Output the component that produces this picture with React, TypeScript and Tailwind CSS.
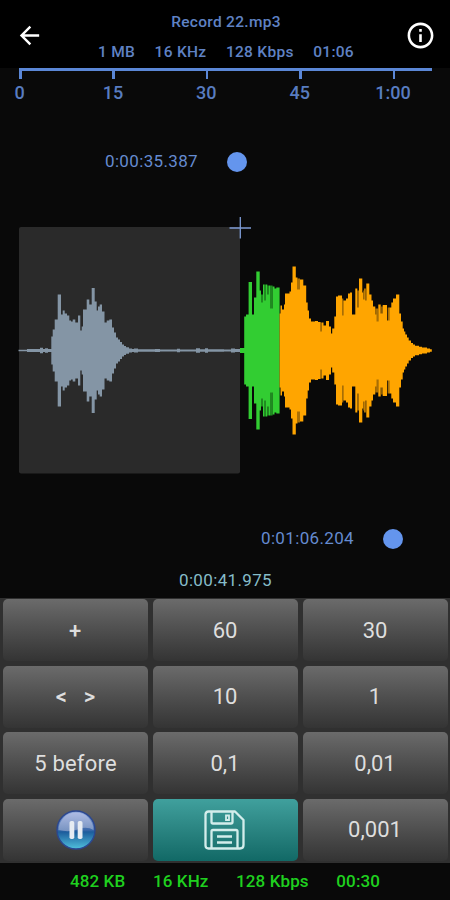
import type { ReactNode } from "react";
import clsx from "clsx";

// [start x, half height] pairs; every bar runs up to the start of the next one
type Bars = [number, number][];

const CENTER = 350.5;
const TOP = 210;

const grayBars: Bars = [
  [18.5, 0.7], [27, 1.4], [40, 2.8], [43, 1.6], [45, 2.2], [48, 1.6], [51.3, 14], [52.7, 21],
  [54.7, 31], [57.7, 56], [61, 36], [62.7, 40], [64.7, 37], [67, 35], [69.3, 30], [71, 29],
  [72.7, 31], [75.3, 28], [78, 35], [80.3, 20], [81.7, 24], [83, 41], [86.7, 51], [89.3, 46],
  [91.7, 62.5], [94.7, 49], [96.7, 40], [98, 44], [99.7, 46], [102, 39], [104.5, 28], [106.7, 30],
  [109.3, 31], [112, 23], [114, 18], [116, 13], [118, 11], [120, 8.5], [122, 6], [124, 4.5],
  [126, 3.2], [129, 2], [132, 1.5], [134, 2], [138, 1.2], [155, 1.6], [160, 1.1], [177, 1.8],
  [180, 1], [196, 2.2], [200, 1.2], [205, 2.2], [208, 1.2], [224, 1], [231, 2], [235, 1.4], [240, 0],
];

const greenBars: Bars = [
  [240, 2.5], [244.2, 34], [246, 36], [248.6, 68.5], [252, 36], [254, 53], [256.3, 79],
  [259.7, 60], [261, 48], [263, 66], [264.5, 50], [266, 66], [267.3, 56], [269, 65],
  [270, 42], [272.6, 64], [274.5, 62], [276.3, 63], [279.6, 0],
];

const orangeBars: Bars = [
  [279.6, 37], [280.5, 45], [282, 41], [284, 46], [285, 57], [289.5, 59], [291, 68], [292.5, 84],
  [295.8, 73], [297.5, 61], [300, 71], [303.3, 65], [306.2, 48], [307.7, 40], [309, 32], [311, 29],
  [315, 29.5], [318, 28.5], [320.6, 19], [322, 28], [323.5, 25], [326, 29.5], [329, 24], [331, 17],
  [332.2, 22], [334.3, 34], [336, 54], [338, 55], [342, 35], [343.3, 50], [346, 52], [348, 57],
  [350, 58], [352, 36], [355.3, 62], [357.3, 43], [359, 72], [362.3, 58], [363.3, 51], [364.3, 62],
  [365.6, 50], [366.3, 67], [369.3, 56], [371.5, 50], [373, 44], [375.3, 36], [376.5, 29],
  [378.3, 46], [380.7, 37], [382.7, 45.5], [387, 30], [389.3, 43], [391.3, 48], [393, 52],
  [396, 56], [399.3, 37], [401, 29], [402.7, 22], [404, 19], [405.3, 16], [407, 13], [408.7, 10],
  [411, 7.5], [413, 6], [415, 4.8], [419, 3.8], [422, 3], [427, 2], [430, 1.2], [431.8, 0],
];

// dimmer slivers that sit in the notches of the coloured parts
const greenShade: Bars = [[261, 56], [263, 0], [264.5, 66], [266, 0], [267.3, 65], [269, 0], [270, 65], [272.6, 0]];
const orangeShade: Bars = [
  [297.5, 72], [300, 0], [320.6, 28], [322, 0], [342, 52], [343.3, 0], [357.3, 60], [359, 0],
  [363.3, 60], [364.3, 0], [375.3, 42], [378.3, 0], [381.2, 44], [382.7, 0], [387.7, 43], [389.3, 0],
];

function barsPath(bars: Bars) {
  return bars
    .slice(0, -1)
    .map(([x, h], i) => `M${x} ${CENTER - h}H${bars[i + 1][0]}V${CENTER + h}H${x}Z`)
    .join("");
}

const ticks = ["0", "15", "30", "45", "1:00"];

function Ruler() {
  return (
    <div className="ml-[19px] w-[413px]">
      <div className="flex h-[12px] border-t-[3px] border-[#5b87d6]">
        {ticks.map((t) => (
          <div key={t} className="w-[93.4px] shrink-0">
            <div className="h-[8px] w-[2.5px] bg-[#5b87d6]" />
          </div>
        ))}
      </div>
      <div className="mt-[2px] flex text-[18px] leading-[22px] font-medium text-[#587cc0]">
        {ticks.map((t) => (
          <div key={t} className="flex w-[93.4px] shrink-0 pl-[0.5px]">
            <span className="flex w-0 justify-center whitespace-nowrap">{t}</span>
          </div>
        ))}
      </div>
    </div>
  );
}

function Waveform() {
  return (
    <svg className="block h-[290px] w-full" viewBox={`0 ${TOP} 450 290`}>
      <rect x="19" y="227" width="221" height="246.5" rx="2" fill="#2a2a2a" />
      <path d={barsPath(grayBars)} fill="#8495a5" />
      <path d={barsPath(greenShade)} fill="#1f8a20" />
      <path d={barsPath(greenBars)} fill="#32cd32" />
      <path d={barsPath(orangeShade)} fill="#a86e05" />
      <path d={barsPath(orangeBars)} fill="#ffa500" />
      <path d="M229.5 228H251M240.3 217V238.5" stroke="#7d9bd4" strokeWidth="1.3" />
    </svg>
  );
}

function PauseIcon() {
  return (
    <svg width="40" height="40" viewBox="0 0 40 40" className="ml-px">
      <defs>
        <linearGradient id="orb" x1="0" y1="0" x2="0" y2="1">
          <stop offset="0" stopColor="#8ca4d8" />
          <stop offset="0.5" stopColor="#3c69ab" />
          <stop offset="0.55" stopColor="#1c5c9c" />
          <stop offset="1" stopColor="#50c0dc" />
        </linearGradient>
        <linearGradient id="gloss" x1="0" y1="0" x2="0" y2="1">
          <stop offset="0" stopColor="#b5c0e6" />
          <stop offset="1" stopColor="#829bc5" />
        </linearGradient>
      </defs>
      <circle cx="20" cy="20" r="19" fill="url(#orb)" stroke="#2b4790" strokeWidth="1.4" />
      <path d="M2.5 20A17.5 17.5 0 0 1 37.5 20Q33 17 26 18Q15 23 2.5 20Z" fill="url(#gloss)" opacity="0.85" />
      <rect x="13.5" y="11" width="4.8" height="18" rx="1.8" fill="#e6ebf2" />
      <rect x="21.7" y="11" width="4.8" height="18" rx="1.8" fill="#e6ebf2" />
    </svg>
  );
}

function SaveIcon() {
  return (
    <svg width="42" height="40" viewBox="0 0 42 40" fill="none" stroke="#d3edeb" strokeWidth="2.3">
      <path d="M4.500 1.500H31L39.500 10V35Q39.500 38.500 36 38.500H4.500Q1.500 38.500 1.500 35.500V4.500Q1.500 1.500 4.500 1.500Z" strokeLinejoin="round" />
      <path d="M7.500 1V12Q7.500 13.500 9 13.500H27Q28.500 13.500 28.500 12V1" />
      <path d="M22 5.500H25V10H22Z" strokeWidth="1.8" />
      <path d="M7.500 39V21.500Q7.500 20 9 20H32Q33.500 20 33.500 21.500V39M13 26.500H28M13 32.500H28" />
    </svg>
  );
}

function Key({ children, accent }: { children: ReactNode; accent?: boolean }) {
  return (
    <button
      className={clsx(
        "flex h-[62px] items-center justify-center rounded-[5px] whitespace-pre text-[22px] text-[#dedede]",
        accent
          ? "bg-linear-to-b from-[#40a09d] to-[#116966]"
          : "bg-linear-to-b from-[#6b6b6b] to-[#343434]"
      )}
    >
      {children}
    </button>
  );
}

export default function App() {
  return (
    <div className="flex h-[900px] w-[450px] flex-col overflow-hidden bg-[#090909] font-['Roboto',sans-serif]">
      <header className="flex h-[68px] shrink-0 bg-black text-[15.5px] leading-[20px] font-medium tracking-[0.3px] text-[#5f82c4]">
        <svg className="mt-[21px] ml-[15px] h-[29px] w-[29px]" viewBox="0 0 24 24" fill="#fff">
          <path d="M20 11H7.830l5.590-5.590L12 4l-8 8 8 8 1.410-1.410L7.830 13H20v-2z" />
        </svg>
        <div className="ml-[54px] w-[256px] pt-[12px]">
          <div className="text-center">Record 22.mp3</div>
          <div className="mt-[10px] flex justify-between">
            <span>1 MB</span>
            <span>16 KHz</span>
            <span>128 Kbps</span>
            <span>01:06</span>
          </div>
        </div>
        <svg className="mt-[20px] ml-[51px] h-[31px] w-[31px]" viewBox="0 0 24 24" fill="#fff">
          <path d="M11 7h2v2h-2zm0 4h2v6h-2zm1-9C6.480 2 2 6.480 2 12s4.480 10 10 10 10-4.480 10-10S17.520 2 12 2zm0 18c-4.410 0-8-3.590-8-8s3.590-8 8-8 8 3.590 8 8-3.590 8-8 8z" />
        </svg>
      </header>

      <Ruler />

      <div className="mt-[48px] flex h-[20px] items-center pl-[105px] text-[17px] tracking-[0.35px] text-[#658bd0]">
        <span className="w-[122px]">0:00:35.387</span>
        <span className="size-[19.5px] rounded-full bg-[#6495ed]" />
      </div>

      <div className="mt-[38px]">
        <Waveform />
      </div>

      <div className="mt-[29px] flex h-[20px] items-center pl-[261px] text-[17px] tracking-[0.35px] text-[#658bd0]">
        <span className="w-[122px]">0:01:06.204</span>
        <span className="size-[19.5px] rounded-full bg-[#6495ed]" />
      </div>
      <div className="mt-[21px] h-[20px] pl-[179px] text-[17px] leading-[20px] tracking-[0.35px] text-[#86bdc9]">
        0:00:41.975
      </div>

      <div className="mt-[8px] grid h-[265px] shrink-0 grid-cols-3 content-start gap-x-[5px] gap-y-[4.6px] bg-[#303030] px-[2.5px] pt-px">
        <Key><span className="font-medium">+</span></Key>
        <Key>60</Key>
        <Key>30</Key>
        <Key><span className="ml-px font-medium [word-spacing:3px]">{"<  >"}</span></Key>
        <Key>10</Key>
        <Key>1</Key>
        <Key><span className="ml-px tracking-[0.2px]">5 before</span></Key>
        <Key>0,1</Key>
        <Key>0,01</Key>
        <Key><PauseIcon /></Key>
        <Key accent><SaveIcon /></Key>
        <Key>0,001</Key>
      </div>

      <footer className="mx-[70px] flex h-[37px] shrink-0 items-center justify-between pt-px text-[17px] font-medium tracking-[0.1px] text-[#1fd01f]">
        <span>482 KB</span>
        <span>16 KHz</span>
        <span>128 Kbps</span>
        <span>00:30</span>
      </footer>
    </div>
  );
}
